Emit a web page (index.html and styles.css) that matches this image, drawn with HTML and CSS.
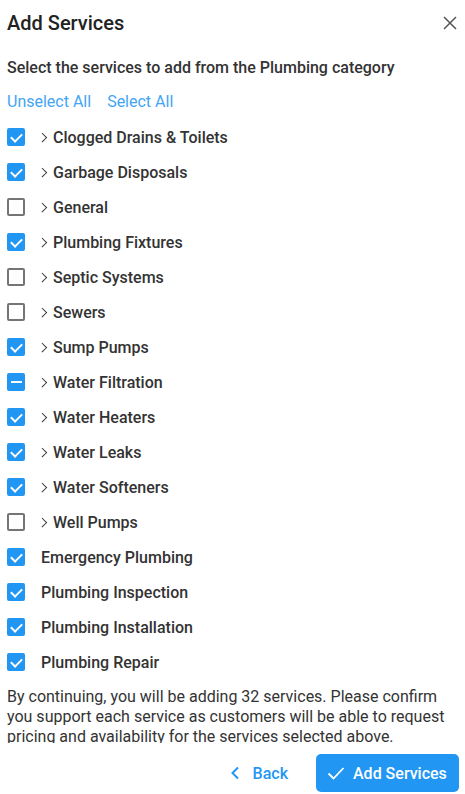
FILE: index.html
```html
<!DOCTYPE html>
<html>
<head>
<meta charset="utf-8">
<link rel="stylesheet" href="styles.css">
</head>
<body>
<div class="dialog">
  <div class="header">
    <h1 class="title">Add Services</h1>
    <svg class="close" width="14" height="14" viewBox="0 0 14 14"><path d="M1 1L13 13M13 1L1 13" stroke="#555" stroke-width="1.5" fill="none"/></svg>
  </div>
  <div class="content">
    <p class="subtitle">Select the services to add from the Plumbing category</p>
    <div class="links"><span class="link">Unselect All</span><span class="link">Select All</span></div>
    <ul class="list">
      <li class="row"><span class="cb on"></span><span class="chev"></span><span class="label">Clogged Drains &amp; Toilets</span></li>
      <li class="row"><span class="cb on"></span><span class="chev"></span><span class="label">Garbage Disposals</span></li>
      <li class="row"><span class="cb"></span><span class="chev"></span><span class="label">General</span></li>
      <li class="row"><span class="cb on"></span><span class="chev"></span><span class="label">Plumbing Fixtures</span></li>
      <li class="row"><span class="cb"></span><span class="chev"></span><span class="label">Septic Systems</span></li>
      <li class="row"><span class="cb"></span><span class="chev"></span><span class="label">Sewers</span></li>
      <li class="row"><span class="cb on"></span><span class="chev"></span><span class="label">Sump Pumps</span></li>
      <li class="row"><span class="cb ind"></span><span class="chev"></span><span class="label">Water Filtration</span></li>
      <li class="row"><span class="cb on"></span><span class="chev"></span><span class="label">Water Heaters</span></li>
      <li class="row"><span class="cb on"></span><span class="chev"></span><span class="label">Water Leaks</span></li>
      <li class="row"><span class="cb on"></span><span class="chev"></span><span class="label">Water Softeners</span></li>
      <li class="row"><span class="cb"></span><span class="chev"></span><span class="label">Well Pumps</span></li>
      <li class="row leaf"><span class="cb on"></span><span class="label">Emergency Plumbing</span></li>
      <li class="row leaf"><span class="cb on"></span><span class="label">Plumbing Inspection</span></li>
      <li class="row leaf"><span class="cb on"></span><span class="label">Plumbing Installation</span></li>
      <li class="row leaf"><span class="cb on"></span><span class="label">Plumbing Repair</span></li>
    </ul>
    <p class="note">By continuing, you will be adding 32 services. Please confirm you support each service as customers will be able to request pricing and availability for the services selected above.</p>
  </div>
  <div class="footer">
    <button class="btn back"><svg width="10" height="14" viewBox="0 0 10 14"><path d="M8 1.5L2.5 7L8 12.5" stroke="#2196f3" stroke-width="2" fill="none"/></svg>Back</button>
    <button class="btn primary"><svg width="18" height="14" viewBox="0 0 18 14"><path d="M1.5 7.5L6.5 12.5L16.5 2" stroke="#fff" stroke-width="1.8" fill="none"/></svg>Add Services</button>
  </div>
</div>
</body>
</html>
```

FILE: styles.css
```css
* { box-sizing: border-box; }
html, body { margin: 0; padding: 0; background: #fff; }
body { font-family: Roboto, "Noto Sans", sans-serif; color: #333; }
.dialog { width: 465px; height: 794px; display: flex; flex-direction: column; }
.header { height: 45px; display: flex; align-items: center; justify-content: space-between; padding: 0 8px 0 7px; flex: none; }
.title { margin: 0; font-size: 20px; font-weight: 500; color: #222; line-height: 24px; }
.close { display: block; }
.content { flex: 1; overflow: hidden; padding: 0 7px; }
.subtitle { margin: 13px 0 0; font-size: 16px; font-weight: 500; line-height: 20px; color: #333; }
.links { margin-top: 14px; display: flex; gap: 16px; line-height: 20px; font-size: 16px; }
.link { color: #42a5f5; }
.list { list-style: none; margin: 7.5px 0 0; padding: 0; }
.row { height: 35px; display: flex; align-items: center; font-size: 16px; font-weight: 500; color: #333; }
.cb { width: 18px; height: 18px; border: 2px solid #757575; border-radius: 2px; flex: none; position: relative; }
.cb.on, .cb.ind { background: #2196f3; border-color: #2196f3; }
.cb.on::after { content: ""; position: absolute; left: 4px; top: 0.5px; width: 5px; height: 9px; border: solid #fff; border-width: 0 2px 2px 0; transform: rotate(45deg); }
.cb.ind::after { content: ""; position: absolute; left: 1.5px; right: 1.5px; top: 6px; height: 2px; background: #fff; }
.chev { width: 6px; height: 10px; margin-left: 16px; margin-right: 6px; position: relative; flex: none; }
.chev::before { content: ""; position: absolute; left: -2.5px; top: 1.5px; width: 5.5px; height: 5.5px; border: solid #333; border-width: 1.6px 1.6px 0 0; transform: rotate(45deg); }
.row.leaf .label { margin-left: 16px; }
.note { margin: 7.5px 0 0; font-size: 16px; line-height: 20px; color: #333; }
.footer { height: 51px; flex: none; display: flex; justify-content: flex-end; align-items: flex-start; padding: 11px 6px 0 0; gap: 28px; }
.btn { font-family: Roboto, sans-serif; font-size: 16px; font-weight: 500; border: none; display: flex; align-items: center; height: 38px; cursor: pointer; }
.back { background: none; color: #2196f3; padding: 0; gap: 13px; }
.primary { background: #2196f3; color: #fff; border-radius: 5px; width: 143px; padding: 0 0 0 11px; gap: 8px; }
```
